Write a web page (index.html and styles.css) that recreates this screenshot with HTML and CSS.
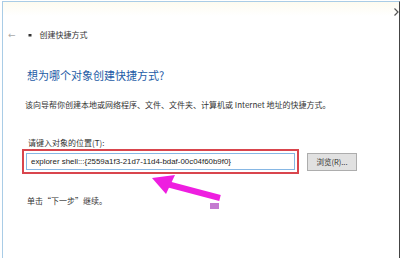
FILE: index.html
```html
<!DOCTYPE html>
<html lang="zh">
<head>
<meta charset="utf-8">
<link rel="stylesheet" href="styles.css">
</head>
<body>
<div class="frame">
  <div class="chrome">
    <svg class="chev" width="5" height="8" viewBox="0 0 5 8"><path d="M0.5 0.5 L4 4 L0.5 7.5" fill="none" stroke="#555" stroke-width="1.2"/></svg>
  </div>
  <div class="header">
    <span class="back">←</span>
    <svg class="sc-icon" width="4" height="4" viewBox="0 0 4 4"><rect x="0.5" y="1" width="3" height="2.5" fill="#333"/></svg>
    <span class="title">创建快捷方式</span>
  </div>
  <div class="content">
    <h1 class="heading">想为哪个对象创建快捷方式?</h1>
    <p class="desc">该向导帮你创建本地或网络程序、文件、文件夹、计算机或 Internet 地址的快捷方式。</p>
    <p class="label">请键入对象的位置(T):</p>
    <div class="row">
      <div class="redbox">
        <div class="input">explorer shell:::{2559a1f3-21d7-11d4-bdaf-00c04f60b9f0}</div>
      </div>
      <div class="btn">浏览(R)...</div>
    </div>
    <p class="hint">单击“下一步”继续。</p>
  </div>
</div>
<svg class="arrow" width="401" height="262" viewBox="0 0 401 262">
  <line x1="167" y1="184" x2="220" y2="198" stroke="#ee1ee0" stroke-width="6"/>
  <polygon points="152,178 175,175 166,194" fill="#ee1ee0"/>
  <rect x="210" y="203" width="9" height="6" fill="#c47ad0"/>
</svg>
</body>
</html>
```
FILE: styles.css
```css
html, body {
  margin: 0;
  padding: 0;
  background: #fff;
}
body {
  width: 401px;
  height: 262px;
  overflow: hidden;
  position: relative;
  font-family: "Noto Sans CJK SC", "Liberation Sans", sans-serif;
  color: #222;
}
.frame {
  margin: 1px 0 0 2px;
  width: 396px;
  height: 256px;
  border-top: 1px solid #a9cce6;
  border-left: 1px solid #a9cce6;
  border-right: 1px solid #444;
  display: flex;
  flex-direction: column;
}
.chrome {
  height: 14px;
  display: flex;
  justify-content: flex-end;
  align-items: flex-end;
  background: linear-gradient(#fdfbf0, #fff);
}
.chev {
  display: block;
}
.header {
  margin-top: 12px;
  height: 14px;
  display: flex;
  align-items: center;
  font-size: 8px;
  line-height: 14px;
}
.back {
  margin-left: 5px;
  color: #aaa;
  font-size: 9px;
  font-family: "DejaVu Sans", sans-serif;
}
.sc-icon {
  margin-left: 12px;
  display: block;
}
.title {
  margin-left: 8px;
  color: #333;
}
.content {
  padding-left: 22px;
  display: flex;
  flex-direction: column;
  align-items: flex-start;
}
.heading {
  margin: 26px 0 0 2px;
  font-size: 11px;
  line-height: 14px;
  font-weight: normal;
  color: #1d5ba6;
}
.desc {
  margin: 17px 0 0 0;
  font-size: 8px;
  line-height: 12px;
  color: #333;
}
.label {
  margin: 26px 0 0 3px;
  font-size: 8px;
  line-height: 12px;
  color: #333;
}
.row {
  margin-left: -3px;
  display: flex;
  align-items: center;
  gap: 8px;
}
.redbox {
  width: 269px;
  height: 17px;
  border: 2px solid #d9454d;
  padding: 2px;
  display: flex;
}
.input {
  flex: 1;
  border: 1px solid #86b7e4;
  padding-left: 4px;
  font-family: "Liberation Sans", sans-serif;
  font-size: 7.9px;
  line-height: 15px;
  color: #222;
  white-space: nowrap;
}
.btn {
  width: 48px;
  height: 16px;
  border: 1px solid #adadad;
  background: #e1e1e1;
  font-size: 7.5px;
  line-height: 16px;
  text-align: center;
  color: #333;
}
.hint {
  margin: 21px 0 0 2px;
  font-size: 8px;
  line-height: 12px;
  color: #333;
}
.arrow {
  position: absolute;
  left: 0;
  top: 0;
  pointer-events: none;
}
```
